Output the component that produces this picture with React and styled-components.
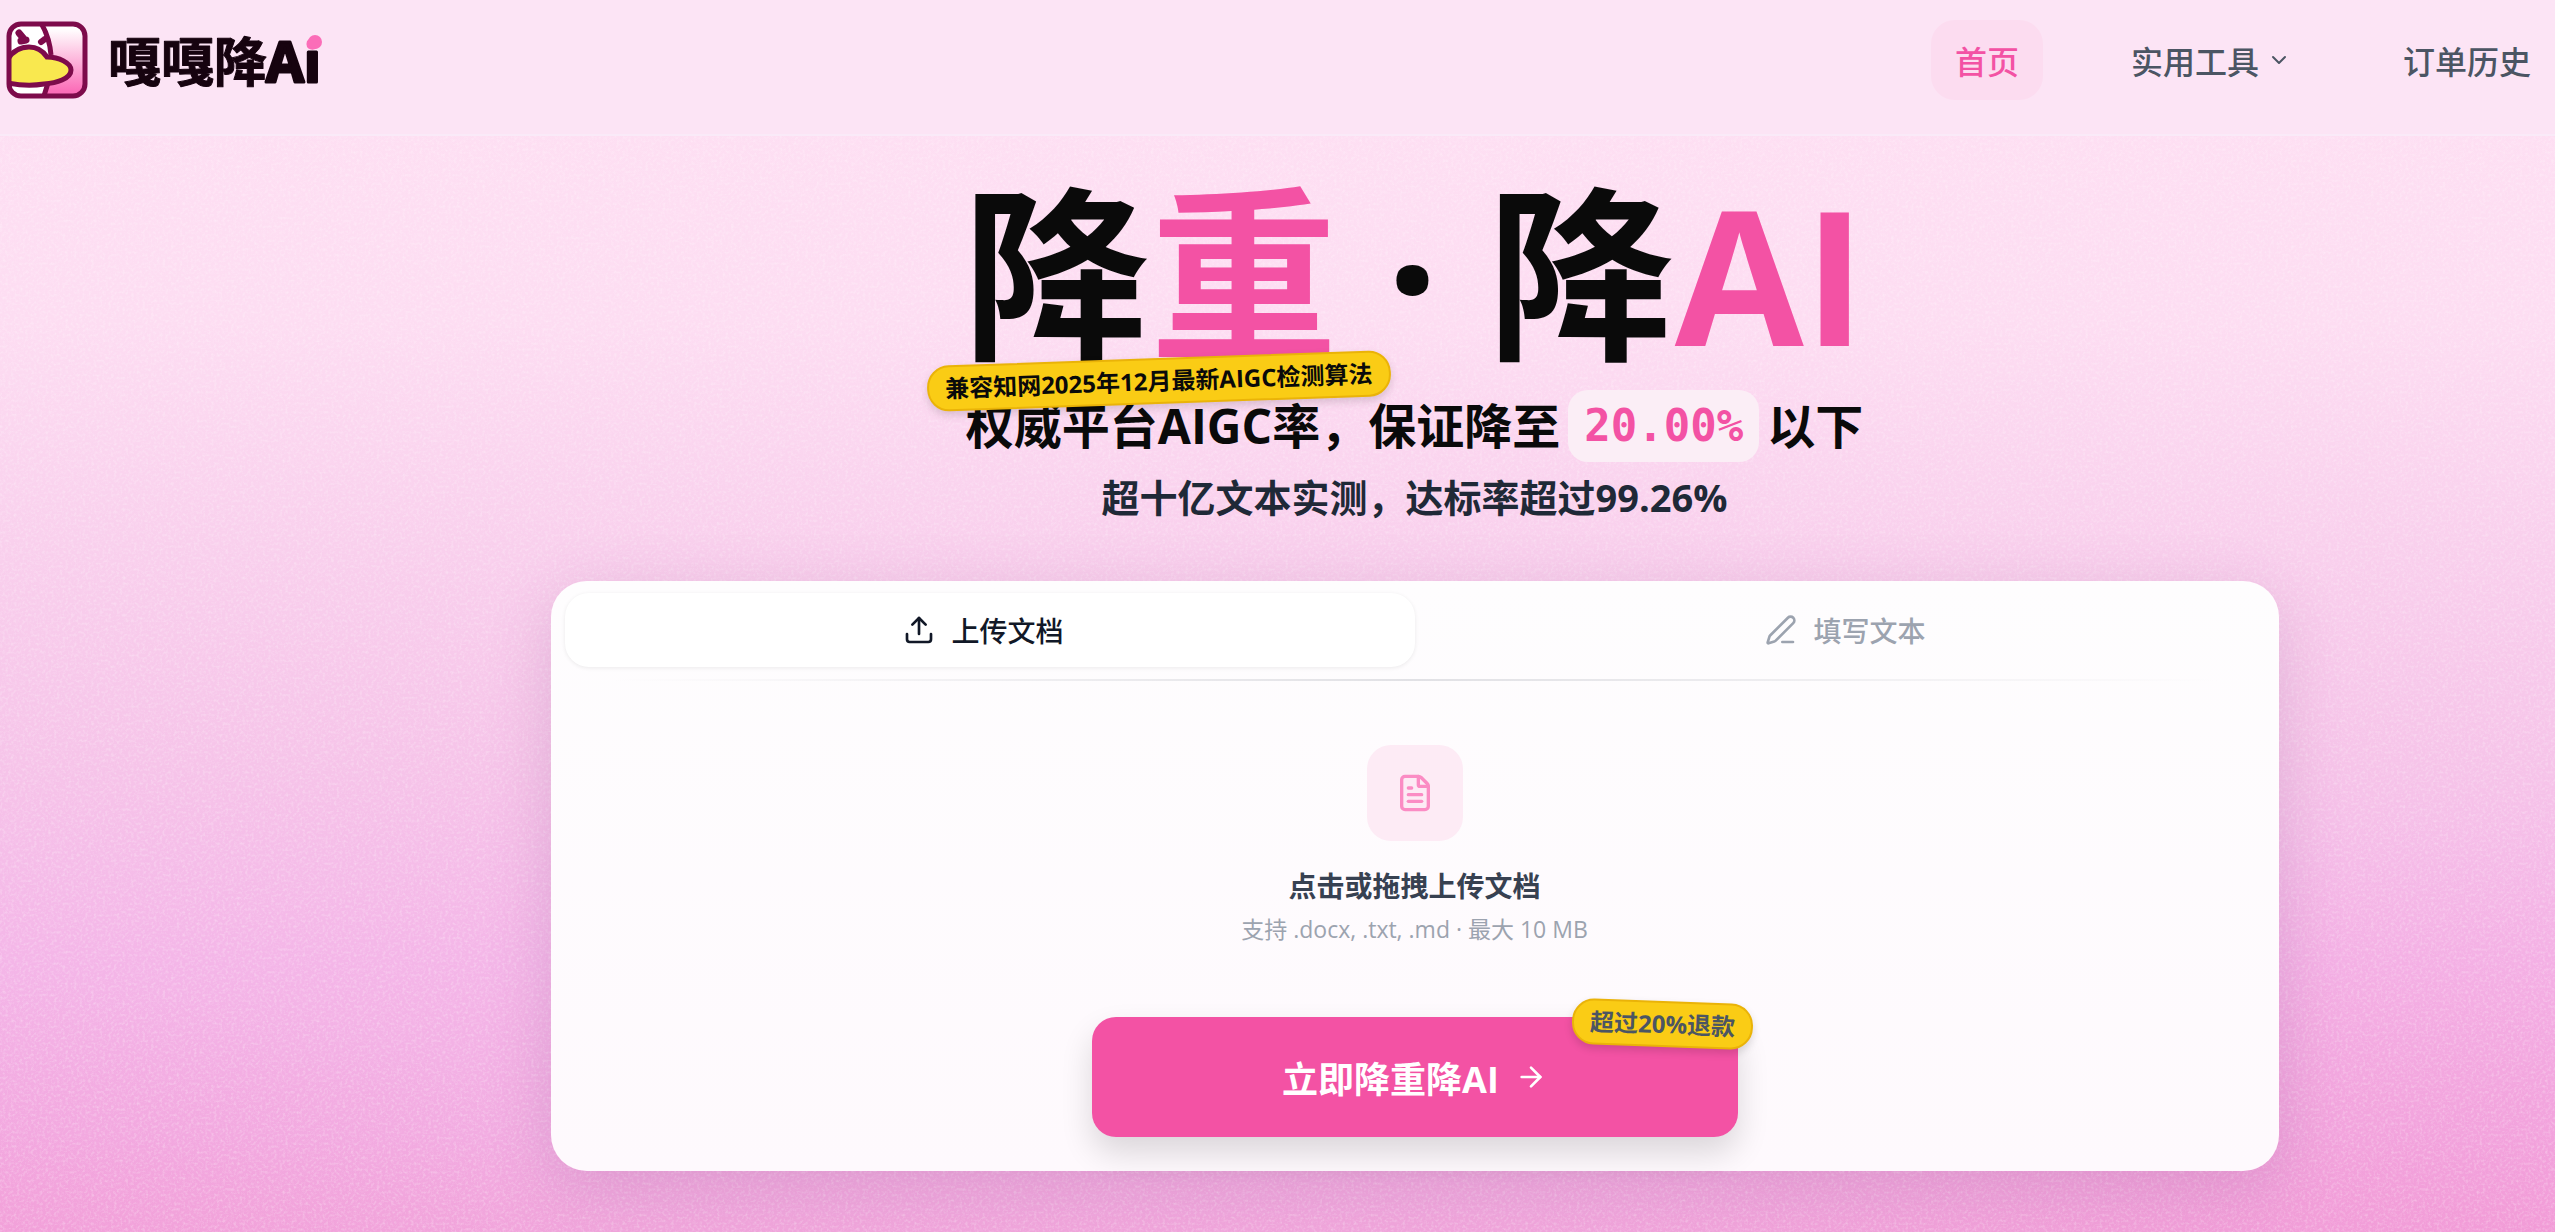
import React from "react";
import styled, { createGlobalStyle } from "styled-components";
import {
  ArrowRight,
  ChevronDown,
  FileText,
  PenLine,
  Upload,
} from "lucide-react";

const COLORS = {
  pink: "#f352a4",
  pinkLight: "#fb8cc4",
  plum: "#7d0b4b",
  ink: "#0a0a0a",
  slate: "#1f2937",
  gray: "#4b5563",
  muted: "#9ca3af",
  yellow: "#facc15",
  yellowDark: "#eab308",
};

const NAV_ITEMS = [
  { label: "首页", active: true },
  { label: "实用工具", hasMenu: true },
  { label: "订单历史" },
];

const Logo = () => {
  return (
    <LogoLink href="#" aria-label="嘎嘎降Ai">
      <svg width="82" height="78" viewBox="0 0 82 78" aria-hidden="true">
        <defs>
          <linearGradient id="logoPink" x1="0" y1="0" x2="0" y2="1">
            <stop offset="0.1" stopColor="#fff" />
            <stop offset="0.9" stopColor="#fb6db8" />
          </linearGradient>
          <clipPath id="logoClip">
            <rect x="3" y="3" width="76" height="72" rx="11" />
          </clipPath>
        </defs>
        <g clipPath="url(#logoClip)">
          <rect width="82" height="78" fill="url(#logoPink)" />
          <path d="M0 0H34C41 12 44 24 44 38C44 52 42 64 38 78H0Z" fill="#fff" />
          <path
            d="M35 2C41 12 44 22 45 34M42 62L37 78"
            fill="none"
            stroke={COLORS.plum}
            strokeWidth="5"
          />
          <path
            d="M2 38C7 30 14 26 23 26C32 26 37 30 41 36C53 36 65 42 65 49C65 58 50 62 38 63C26 65 12 64 2 62Z"
            fill="#f9e84f"
            stroke={COLORS.plum}
            strokeWidth="5"
          />
          <path
            d="M13 12L18 18M15 20L20 19"
            stroke={COLORS.plum}
            strokeWidth="7"
            strokeLinecap="round"
          />
          <path
            d="M35 21L39 18"
            stroke={COLORS.plum}
            strokeWidth="6"
            strokeLinecap="round"
          />
        </g>
        <rect
          x="3"
          y="3"
          width="76"
          height="72"
          rx="12"
          fill="none"
          stroke={COLORS.plum}
          strokeWidth="5"
        />
      </svg>
      <svg width="224" height="80" viewBox="0 0 224 80" aria-hidden="true">
        <defs>
          <linearGradient
            id="wordInk"
            gradientUnits="userSpaceOnUse"
            x1="0"
            y1="0"
            x2="0"
            y2="80"
          >
            <stop offset="0.375" stopColor="#fb6db8" />
            <stop offset="0.375" stopColor="#16030f" />
          </linearGradient>
        </defs>
        <WordmarkHan x="0" y="62">
          嘎嘎降
        </WordmarkHan>
        <WordmarkLatin x="158" y="62">
          A<tspan fill="url(#wordInk)" stroke="url(#wordInk)">i</tspan>
        </WordmarkLatin>
        <circle cx="207" cy="22" r="7" fill="#fb6db8" />
      </svg>
    </LogoLink>
  );
};

const App = () => {
  return (
    <Page>
      <GlobalStyle />
      <Grain aria-hidden="true">
        <filter id="grain">
          <feTurbulence
            type="fractalNoise"
            baseFrequency="0.35"
            numOctaves="2"
          />
          <feColorMatrix values="0 0 0 0 1  0 0 0 0 1  0 0 0 0 1  1.6 0 0 0 -0.7" />
        </filter>
        <rect width="100%" height="100%" filter="url(#grain)" />
      </Grain>
      <Header>
        <Logo />
        <Nav>
          {NAV_ITEMS.map(({ label, active, hasMenu }) => (
            <NavLink key={label} href="#" $active={active}>
              {label}
              {hasMenu && <ChevronDown size={24} strokeWidth={2} />}
            </NavLink>
          ))}
        </Nav>
      </Header>
      <Main>
        <Hero>
          <Title>
            降<Accent>重</Accent> · 降<Accent>AI</Accent>
            <AlgorithmBadge>兼容知网2025年12月最新AIGC检测算法</AlgorithmBadge>
          </Title>
          <Pledge>
            权威平台AIGC率，保证降至
            <Rate>20.00%</Rate>
            以下
          </Pledge>
          <Proof>超十亿文本实测，达标率超过99.26%</Proof>
        </Hero>
        <Card>
          <Tabs role="tablist">
            <Tab type="button" role="tab" aria-selected="true" $active>
              <Upload size={32} strokeWidth={2} />
              上传文档
            </Tab>
            <Tab type="button" role="tab" aria-selected="false">
              <PenLine size={32} strokeWidth={2} />
              填写文本
            </Tab>
          </Tabs>
          <Divider />
          <DropZone type="button">
            <FileTile>
              <FileText size={40} strokeWidth={2} />
            </FileTile>
            <DropTitle>点击或拖拽上传文档</DropTitle>
            <DropHint>支持 .docx, .txt, .md · 最大 10 MB</DropHint>
          </DropZone>
          <Action>
            <SubmitButton type="button">
              立即降重降AI
              <ArrowRight size={32} strokeWidth={2} />
            </SubmitButton>
            <RefundBadge>超过20%退款</RefundBadge>
          </Action>
        </Card>
      </Main>
    </Page>
  );
};

const GlobalStyle = createGlobalStyle`
  *, *::before, *::after {
    box-sizing: border-box;
  }

  body {
    margin: 0;
    font-family: "Open Sans", "Noto Sans CJK SC", sans-serif;
    color: ${COLORS.ink};
  }

  button {
    font-family: inherit;
    border: 0;
    cursor: pointer;
  }
`;

const Page = styled.div`
  position: relative;
  min-height: 100vh;
  overflow: hidden;
  background:
    radial-gradient(
      ellipse 40% 34% at 100% 100%,
      rgba(243, 140, 208, 0.4),
      transparent
    ),
    radial-gradient(
      ellipse 24% 20% at 0% 100%,
      rgba(245, 145, 210, 0.25),
      transparent
    ),
    linear-gradient(
      180deg,
      #fee0f3 0%,
      #fdddf2 26%,
      #f9d0ed 44%,
      #f6c4e9 62%,
      #f4b6e8 78%,
      #f2ade2 92%,
      #f1a6dc 100%
    );
`;

const Grain = styled.svg`
  position: absolute;
  inset: 0;
  width: 100%;
  height: 100%;
  opacity: 0.4;
`;

const Header = styled.header`
  position: relative;
  display: flex;
  align-items: flex-start;
  justify-content: space-between;
  height: 136px;
  padding: 20px 0 0 6px;
  background: #fce4f5;
  border-bottom: 2px solid #faeaf8;
`;

const LogoLink = styled.a`
  display: flex;
  align-items: center;
  gap: 20px;
  height: 80px;
`;

const WordmarkHan = styled.text`
  font-family: "Noto Sans CJK SC", sans-serif;
  font-size: 53px;
  font-weight: 700;
  fill: #16030f;
  stroke: #16030f;
  stroke-width: 1px;
  stroke-linejoin: round;
`;

const WordmarkLatin = styled.text`
  font-family: "Open Sans", sans-serif;
  font-size: 55px;
  font-weight: 700;
  fill: #16030f;
  stroke: #16030f;
  stroke-width: 3px;
  stroke-linejoin: round;
`;

const Nav = styled.nav`
  display: flex;
  gap: 64px;
`;

const NavLink = styled.a`
  display: flex;
  align-items: center;
  gap: 8px;
  height: 80px;
  padding: 0 24px;
  border-radius: 24px;
  font-size: 32px;
  font-weight: 500;
  text-decoration: none;
  color: ${(props) => (props.$active ? COLORS.pink : COLORS.gray)};
  background: ${(props) => (props.$active ? "#fcdcf0" : "transparent")};
`;

const Main = styled.main`
  position: relative;
  display: flex;
  flex-direction: column;
  align-items: center;
  padding: 32px 0 60px 274px;
`;

const Hero = styled.section`
  display: flex;
  flex-direction: column;
  align-items: center;
  margin-bottom: 56px;
`;

const Title = styled.h1`
  position: relative;
  margin: 0;
  font-size: 187px;
  line-height: 212px;
  font-weight: 700;
`;

const Accent = styled.span`
  color: ${COLORS.pink};
`;

const Badge = styled.span`
  position: absolute;
  padding: 4px 16px;
  border: 2px solid ${COLORS.yellowDark};
  border-radius: 22px;
  background: ${COLORS.yellow};
  box-shadow: 0 4px 8px rgba(0, 0, 0, 0.14);
  font-size: 24px;
  line-height: 34px;
  font-weight: 700;
  white-space: nowrap;
`;

const AlgorithmBadge = styled(Badge)`
  left: -36px;
  bottom: -24px;
  transform: rotate(-2deg);
`;

const RefundBadge = styled(Badge)`
  top: -16px;
  right: -16px;
  color: ${COLORS.gray};
  transform: rotate(2deg);
`;

const Pledge = styled.p`
  display: flex;
  align-items: center;
  margin: 10px 0 0;
  font-size: 48px;
  line-height: 72px;
  font-weight: 700;
`;

const Rate = styled.span`
  margin: 0 8px;
  padding: 0 16px;
  border-radius: 20px;
  background: #fbeef6;
  color: ${COLORS.pink};
  font-family: "DejaVu Sans Mono", monospace;
  font-size: 44px;
`;

const Proof = styled.p`
  margin: 7px 0 0;
  font-size: 38px;
  line-height: 56px;
  font-weight: 700;
  color: ${COLORS.slate};
`;

const Card = styled.section`
  width: 100%;
  max-width: 1728px;
  border-radius: 36px;
  background: linear-gradient(180deg, #fefdfe, #fef9fd);
  box-shadow: 0 16px 64px rgba(120, 60, 120, 0.18);
`;

const Tabs = styled.div`
  display: grid;
  grid-template-columns: 1fr 1fr;
  padding: 12px 14px;
`;

const Tab = styled.button`
  display: flex;
  align-items: center;
  justify-content: center;
  gap: 16px;
  height: 74px;
  padding: ${(props) => (props.$active ? "0 12px 0 0" : "0 0 0 12px")};
  border-radius: 24px;
  font-size: 28px;
  font-weight: 500;
  color: ${(props) => (props.$active ? "#111827" : COLORS.muted)};
  background: ${(props) => (props.$active ? "#fff" : "transparent")};
  box-shadow: ${(props) =>
    props.$active ? "0 1px 4px rgba(0, 0, 0, 0.08)" : "none"};
`;

const Divider = styled.hr`
  height: 2px;
  margin: 0 60px;
  border: 0;
  background: linear-gradient(90deg, transparent, #e1e1e5, transparent);
`;

const DropZone = styled.button`
  display: flex;
  flex-direction: column;
  align-items: center;
  width: 100%;
  padding: 64px 0 0;
  background: transparent;
`;

const FileTile = styled.span`
  display: grid;
  place-items: center;
  width: 96px;
  height: 96px;
  margin-bottom: 24px;
  border-radius: 24px;
  background: #fdebf5;
  color: ${COLORS.pinkLight};
`;

const DropTitle = styled.span`
  font-size: 28px;
  line-height: 42px;
  font-weight: 600;
  color: #374151;
`;

const DropHint = styled.span`
  margin-top: 4px;
  font-size: 23px;
  line-height: 36px;
  color: ${COLORS.muted};
`;

const Action = styled.div`
  position: relative;
  width: 646px;
  max-width: 100%;
  margin: 70px auto 0;
  padding-bottom: 34px;
`;

const SubmitButton = styled.button`
  display: flex;
  align-items: center;
  justify-content: center;
  gap: 16px;
  width: 100%;
  height: 120px;
  border-radius: 24px;
  background: ${COLORS.pink};
  box-shadow: 0 16px 32px rgba(0, 0, 0, 0.14);
  color: #fff;
  font-size: 36px;
  font-weight: 700;
`;

export default App;
